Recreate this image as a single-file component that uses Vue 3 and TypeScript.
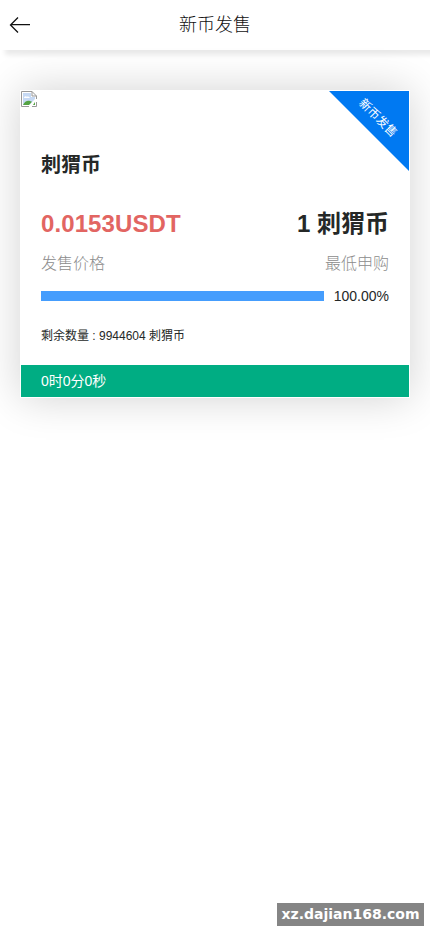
<script setup lang="ts">
const title: string = '新币发售'
const coin = {
  name: '刺猬币',
  price: '0.0153USDT',
  minimum: '1 刺猬币',
  remaining: 9944604,
  progress: 100,
}
const countdown = { hours: 0, minutes: 0, seconds: 0 }
</script>

<template>
  <div class="page">
    <header class="nav">
      <button class="back" aria-label="返回">
        <svg width="22" height="18" viewBox="0 0 22 18" fill="none" stroke="#111" stroke-width="1.3">
          <path d="M9 1.500 1.500 9 9 16.500M1.500 8.700H21" />
        </svg>
      </button>
      <h1>{{ title }}</h1>
    </header>

    <main class="card">
      <div class="ribbon"><span>{{ title }}</span></div>
      <svg class="broken" width="16" height="16" viewBox="0 0 16 16">
        <path d="M.5.5H11L15.500 5V8L8 15.500H.5z" fill="#fff" />
        <path d="M2 2h8v4h4v2l-6 6H2z" fill="#c6d9f4" />
        <path d="M3 7c0-1.800 2-2.300 2.800-1.200C7.500 5 9 6 8.700 7z" fill="#fff" />
        <path d="M2 14c1.500-3.500 4.500-5 7-4l2 .8L8 14z" fill="#54a343" />
        <path d="M12 14l2-3v3z" fill="#54a343" />
        <path d="M8 15.500H.5V.5H11L15.500 5V8M11 .5V5h4.500M15.500 11v4.500H11" fill="none" stroke="#999" />
      </svg>
      <div class="content">
        <h2>{{ coin.name }}</h2>
        <div class="row values">
          <strong class="price">{{ coin.price }}</strong>
          <strong>{{ coin.minimum }}</strong>
        </div>
        <div class="row labels"><span>发售价格</span><span>最低申购</span></div>
        <div class="row progress">
          <div class="track"><div class="fill" :style="{ width: coin.progress + '%' }"></div></div>
          <span>{{ coin.progress.toFixed(2) }}%</span>
        </div>
        <p class="remaining">剩余数量 : {{ coin.remaining }} {{ coin.name }}</p>
      </div>
      <footer class="timer">{{ countdown.hours }}时{{ countdown.minutes }}分{{ countdown.seconds }}秒</footer>
    </main>
    <div class="site">xz.dajian168.com</div>
  </div>
</template>

<style>
body {
  background: #fff;
}
</style>

<style scoped>
.page {
  position: relative;
  height: 932px;
  overflow: hidden;
  color: #252827;
  font-family: "Liberation Sans", "Noto Sans CJK SC", sans-serif;
}
.nav {
  display: grid;
  grid-template-columns: 40px 1fr 40px;
  align-items: center;
  height: 50px;
  background: #fff;
  box-shadow: 5px 5px 5px #eaeaea;
}
.back {
  display: flex;
  padding: 0 0 0 9px;
  border: 0;
  background: none;
}
h1 {
  margin: 0;
  font-size: 18px;
  line-height: 26px;
  font-weight: 300;
  text-align: center;
  color: #111;
}
.card {
  position: relative;
  box-sizing: border-box;
  height: 308px;
  margin: 40px 20px 0;
  border: 1px solid #fff;
  background: #fff;
  box-shadow: 0 0 40px rgba(0, 0, 0, 0.18);
}
.broken {
  display: block;
}
.ribbon {
  position: absolute;
  top: 0;
  right: 0;
  width: 80px;
  height: 80px;
  background: #0079f2;
  clip-path: polygon(0 0, 100% 0, 100% 100%);
}
.ribbon span {
  position: absolute;
  top: 18px;
  left: 24px;
  width: 50px;
  color: #fff;
  font-size: 12px;
  line-height: 18px;
  text-align: center;
  white-space: nowrap;
  transform: rotate(45deg);
}
.content {
  display: flex;
  flex-direction: column;
  height: 258px;
  padding: 0 20px;
}
h2 {
  margin: 43px 0 0;
  font-size: 20px;
  line-height: 30px;
}
.row {
  display: flex;
  align-items: center;
  justify-content: space-between;
}
.values {
  height: 36px;
  margin-top: 26px;
  font-size: 24px;
  line-height: 36px;
}
.price {
  color: #e26562;
  letter-spacing: 0.1px;
}
.labels {
  height: 24px;
  margin-top: 8px;
  color: #8c8c8c;
  font-size: 16px;
  font-weight: 300;
}
.progress {
  height: 20px;
  margin-top: 12px;
  gap: 10px;
  font-size: 14px;
}
.track {
  flex: 1;
  height: 10px;
  background: #eee;
}
.fill {
  height: 100%;
  background: #459dfd;
}
.remaining {
  margin: 20px 0 0;
  font-size: 12px;
  line-height: 20px;
}
.timer {
  height: 32px;
  padding: 0 20px;
  background: #00ad83;
  color: #fff;
  font-size: 14px;
  line-height: 32px;
}
.site {
  position: absolute;
  right: 6px;
  bottom: 6px;
  box-sizing: border-box;
  width: 147px;
  height: 23px;
  background: #858585;
  color: #fff;
  font: bold 14px/23px "DejaVu Sans", sans-serif;
  text-align: center;
  white-space: nowrap;
}
</style>
